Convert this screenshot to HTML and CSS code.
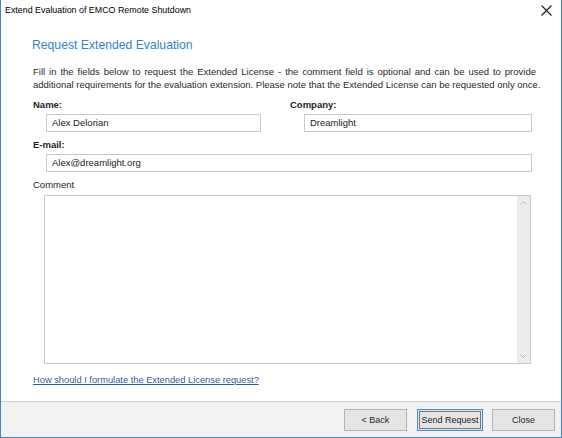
FILE: index.html
```html
<!DOCTYPE html>
<html>
<head>
<meta charset="utf-8">
<link rel="stylesheet" href="styles.css">
</head>
<body>
<div class="window">
  <div class="titlebar">
    <span class="title">Extend Evaluation of EMCO Remote Shutdown</span>
    <svg class="close" width="11" height="11" viewBox="0 0 11 11"><path d="M0.5 0.5 L10.5 10.5 M10.5 0.5 L0.5 10.5" stroke="#1a1a1a" stroke-width="1.1" fill="none"/></svg>
  </div>
  <div class="content">
    <h1 class="heading">Request Extended Evaluation</h1>
    <p class="desc"><span class="line first">Fill in the fields below to request the Extended License - the comment field is optional and can be used to provide</span><span class="line">additional requirements for the evaluation extension. Please note that the Extended License can be requested only once.</span></p>
    <div class="row">
      <div class="field left">
        <div class="label bold">Name:</div>
        <div class="input name-input">Alex Delorian</div>
      </div>
      <div class="field right">
        <div class="label bold">Company:</div>
        <div class="input company-input">Dreamlight</div>
      </div>
    </div>
    <div class="field">
      <div class="label bold">E-mail:</div>
      <div class="input email-input">Alex@dreamlight.org</div>
    </div>
    <div class="field">
      <div class="label">Comment</div>
      <div class="textarea">
        <div class="scrollbar">
          <svg width="7" height="4" viewBox="0 0 7 4"><path d="M0.5 3.5 L3.5 0.5 L6.5 3.5" stroke="#b8b8b8" fill="none"/></svg>
          <svg width="7" height="4" viewBox="0 0 7 4"><path d="M0.5 0.5 L3.5 3.5 L6.5 0.5" stroke="#b8b8b8" fill="none"/></svg>
        </div>
      </div>
    </div>
    <a class="link" href="#">How should I formulate the Extended License request?</a>
  </div>
  <div class="footer">
    <button class="btn">&lt; Back</button>
    <button class="btn primary">Send Request</button>
    <button class="btn">Close</button>
  </div>
</div>
</body>
</html>
```
FILE: styles.css
```css
* { box-sizing: border-box; }
html, body { margin: 0; padding: 0; background: #fff; }
body {
  width: 562px;
  height: 438px;
  font-family: "Liberation Sans", Arial, sans-serif;
  font-size: 9.5px;
  color: #1e1e1e;
  overflow: hidden;
}
.window {
  width: 562px;
  height: 438px;
  border-left: 1px solid #3d85cf;
  border-right: 1px solid #3d85cf;
  border-bottom: 1px solid #3d85cf;
  display: flex;
  flex-direction: column;
}
.titlebar {
  flex: none;
  height: 30px;
  display: flex;
  align-items: flex-start;
  justify-content: space-between;
  padding: 4px 9px 0 4px;
}
.title { font-size: 8.9px; color: #000; line-height: 13px; white-space: nowrap; }
.close { margin-top: 1px; }
.content {
  flex: 1;
  min-height: 0;
  padding: 7px 0 0 31px;
  display: flex;
  flex-direction: column;
}
.heading {
  margin: 0;
  font-size: 12.2px;
  font-weight: 400;
  color: #3183cc;
  line-height: 16px;
}
.desc {
  margin: 12px 0 0 1px;
  line-height: 13px;
  color: #2a2a2a;
}
.line { display: block; white-space: nowrap; }
.line.first {
  width: 503px;
  white-space: normal;
  text-align: justify;
  text-align-last: justify;
}
.row { display: flex; margin-top: 7px; }
.field { display: flex; flex-direction: column; margin-left: 1px; }
.left { width: 256px; }
.right { width: 243px; }
.label { line-height: 13px; height: 13px; white-space: nowrap; }
.bold { font-weight: 700; }
.input {
  margin-top: 3px;
  height: 18px;
  border: 1px solid #c8c8c8;
  padding: 0 5px;
  line-height: 16px;
  color: #222;
  margin-left: 13px;
  white-space: nowrap;
}
.name-input { width: 215px; }
.company-input { margin-left: 14px; width: 228px; }
.email-input { width: 486px; }
.content > .field { margin-top: 6px; }
.textarea {
  margin-top: 4px;
  margin-left: 11px;
  width: 487px;
  height: 169px;
  border: 1px solid #c8c8c8;
  display: flex;
  justify-content: flex-end;
}
.scrollbar {
  width: 13px;
  background: #ececec;
  display: flex;
  flex-direction: column;
  justify-content: space-between;
  align-items: center;
  padding: 5px 0 5px;
}
.link {
  margin-top: 10px;
  margin-left: 1px;
  font-size: 9.3px;
  color: #3a5a9c;
  text-decoration: underline;
  line-height: 13px;
  align-self: flex-start;
  white-space: nowrap;
}
.footer {
  flex: none;
  height: 36px;
  border-top: 1px solid #cfcfcf;
  background: #f2f2f2;
  display: flex;
  justify-content: flex-end;
  align-items: flex-start;
  padding: 7px 6px 0 0;
  gap: 9px;
}
.btn {
  font-family: inherit;
  font-size: 9px;
  color: #1e1e1e;
  width: 63px;
  height: 22px;
  background: #e5e5e5;
  border: 1px solid #b4b4b4;
  padding: 0;
  margin: 0;
  white-space: nowrap;
}
.btn.primary {
  width: 66px;
  border: 1px solid #3c8ad8;
  box-shadow: inset 0 0 0 1px #e5e5e5, inset 0 0 0 2px #7a7a7a;
  margin-left: 1px;
}
```
